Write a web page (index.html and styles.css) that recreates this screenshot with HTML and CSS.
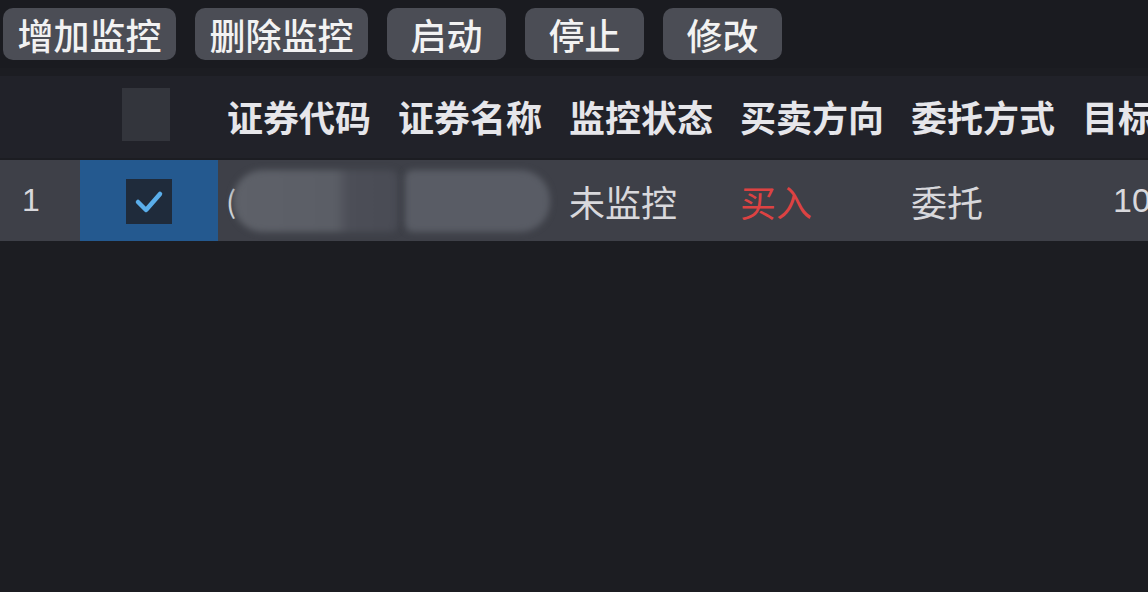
FILE: index.html
```html
<!DOCTYPE html>
<html lang="zh-CN">
<head>
<meta charset="utf-8">
<title>监控</title>
<link rel="stylesheet" href="styles.css">
</head>
<body>
<div class="app">
  <div class="toolbar">
    <button class="btn">增加监控</button>
    <button class="btn">删除监控</button>
    <button class="btn">启动</button>
    <button class="btn">停止</button>
    <button class="btn">修改</button>
  </div>
  <div class="table">
    <div class="row head">
      <div class="cell idx"></div>
      <div class="cell chk"><span class="box"></span></div>
      <div class="cell col">证券代码</div>
      <div class="cell col">证券名称</div>
      <div class="cell col">监控状态</div>
      <div class="cell col">买卖方向</div>
      <div class="cell col">委托方式</div>
      <div class="cell col">目标价格</div>
    </div>
    <div class="row body">
      <div class="cell idx">1</div>
      <div class="cell chk sel"><span class="box on"><svg viewBox="0 0 46 45" width="46" height="45"><path d="M12 23 L20 31 L34 15" fill="none" stroke="#5aaeea" stroke-width="4.5" stroke-linecap="round" stroke-linejoin="round"/></svg></span></div>
      <div class="cell col code"><span class="paren">(</span><span class="smudge s1"></span></div>
      <div class="cell col name"><span class="smudge s2"></span></div>
      <div class="cell col">未监控</div>
      <div class="cell col buy">买入</div>
      <div class="cell col">委托</div>
      <div class="cell col price">10.00</div>
    </div>
  </div>
</div>
</body>
</html>
```

FILE: styles.css
```css
html, body {
  margin: 0;
  padding: 0;
  background: #1c1d22;
  overflow: hidden;
  width: 1148px;
  height: 592px;
}
.app {
  font-family: "Noto Sans CJK SC", "Noto Sans", sans-serif;
  color: #e4e4e6;
  width: 1148px;
  height: 592px;
  overflow: hidden;
}
.toolbar {
  display: flex;
  gap: 19px;
  padding: 8px 0 0 3px;
  height: 68px;
  box-sizing: border-box;
  background: #1a1b20;
}
.btn {
  font-family: inherit;
  font-size: 36px;
  font-weight: 500;
  line-height: 52px;
  height: 52px;
  min-width: 119px;
  padding: 0 14.5px;
  border: none;
  border-radius: 10px;
  background: #4b4d55;
  color: #f2f2f2;
  display: flex;
  align-items: center;
  justify-content: center;
}
.table {
  margin-top: 8px;
  width: 1400px;
}
.row {
  display: flex;
}
.row.head {
  height: 82px;
  background: #212229;
  font-weight: 700;
  color: #e6e6ea;
}
.row.body {
  margin-top: 2px;
  height: 81px;
  background: #3e4048;
  color: #d8d8dc;
}
.cell {
  display: flex;
  align-items: center;
  font-size: 36px;
  white-space: nowrap;
  flex-shrink: 0;
}
.idx {
  width: 78px;
  padding-left: 22px;
  box-sizing: border-box;
  margin-right: 2px;
}
.row.body .idx { background: #3e4048; font-family: "Liberation Sans", sans-serif; font-size: 32px; }
.chk {
  width: 138px;
  justify-content: center;
}
.chk.sel { background: #24598f; }
.box {
  display: block;
  width: 48px;
  height: 53px;
  background: #33353c;
  margin-left: -6px;
  margin-top: -6px;
}
.box.on {
  width: 46px;
  height: 45px;
  background: #1f2b3b;
  margin-left: 0;
  margin-top: 2px;
}
.box svg { display: block; }
.col {
  width: 171px;
  padding-left: 9px;
  box-sizing: border-box;
}
.row.head .col { padding-bottom: 2px; }
.code { padding-left: 8px; }
.paren { color: #e0e0e0; font-size: 30px; margin-top: -2px; }
.smudge {
  display: block;
  flex-shrink: 0;
  height: 62px;
  filter: blur(3px);
}
.s1 {
  width: 165px;
  margin-left: -3px;
  margin-right: -40px;
  border-radius: 30px 8px 8px 30px;
  background: linear-gradient(90deg, #5e6169 0%, #5b5e66 62%, #4c4e57 70%, #494b54 100%);
}
.s2 {
  width: 145px;
  margin-left: 7px;
  border-radius: 8px 30px 30px 8px;
  background: #595c65;
}
.buy { color: #dc4242; }
.price { padding-left: 40px; font-family: "Liberation Sans", sans-serif; font-size: 34px; }
```
